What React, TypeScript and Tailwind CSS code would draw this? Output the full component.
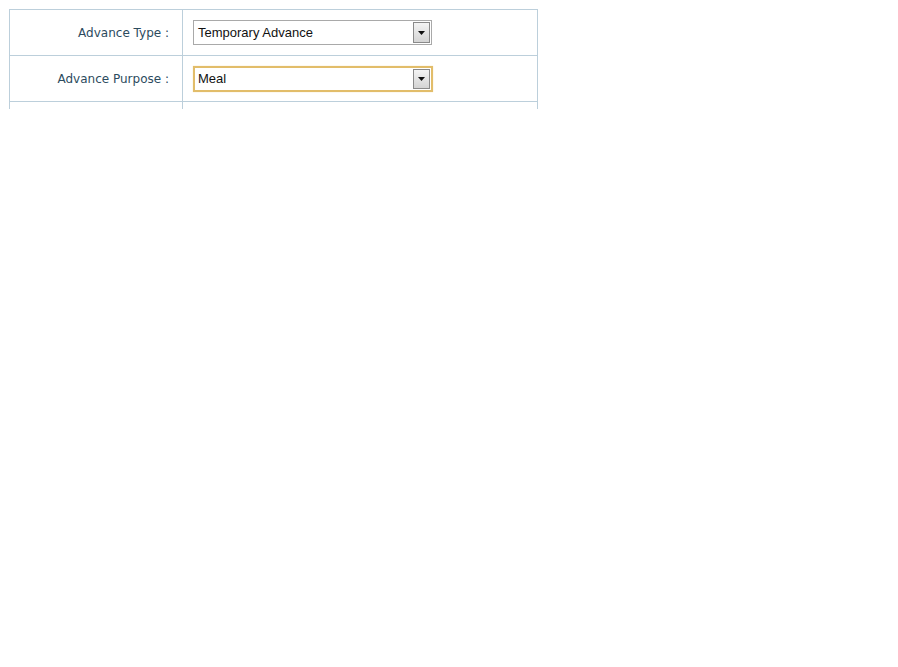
type Row = {
  label: string;
  value: string;
  focused?: boolean;
};

const rows: Row[] = [
  { label: "Advance Type :", value: "Temporary Advance" },
  { label: "Advance Purpose :", value: "Meal", focused: true },
];

const ArrowButton = () => (
  <div className="absolute right-[1px] top-[1px] bottom-[1px] w-[17px] border border-[#8a8a8a] bg-gradient-to-b from-[#f4f4f4] to-[#d4d4d4] flex items-center justify-center">
    <svg width="7" height="4" viewBox="0 0 7 4">
      <path d="M0 0h7L3.5 4z" fill="#111" />
    </svg>
  </div>
);

const FakeSelect = ({ value, focused }: { value: string; focused?: boolean }) => (
  <div
    className={
      focused
        ? "relative w-[240px] h-[26px] border-2 border-[#e2bd6a] bg-white flex items-center pl-[3px] shadow-[0_0_1px_#f3dca6]"
        : "relative w-[239px] h-[25px] border border-[#a9a9a9] bg-white flex items-center pl-[4px]"
    }
  >
    <span className="text-[13px] text-[#111]" style={{ fontFamily: '"Liberation Sans", Arial, sans-serif' }}>
      {value}
    </span>
    <ArrowButton />
  </div>
);

export default function App() {
  return (
    <div className="w-[898px] h-[667px] bg-white pl-[9px] pt-[9px]">
      <div className="w-[529px] border-l border-r border-t border-[#bccfdb]">
        {rows.map((r) => (
          <div key={r.label} className="flex h-[46px] border-b border-[#bccfdb]">
            <div
              className="w-[172px] flex items-center justify-end pr-[13px] text-[12px] text-[#2c4b5e]"
              style={{ fontFamily: '"DejaVu Sans", Verdana, sans-serif' }}
            >
              {r.label}
            </div>
            <div className="flex-1 border-l border-[#bccfdb] flex items-center pl-[10px]">
              <FakeSelect value={r.value} focused={r.focused} />
            </div>
          </div>
        ))}
        <div className="flex h-[7px]">
          <div className="w-[172px]" />
          <div className="flex-1 border-l border-[#bccfdb]" />
        </div>
      </div>
    </div>
  );
}
